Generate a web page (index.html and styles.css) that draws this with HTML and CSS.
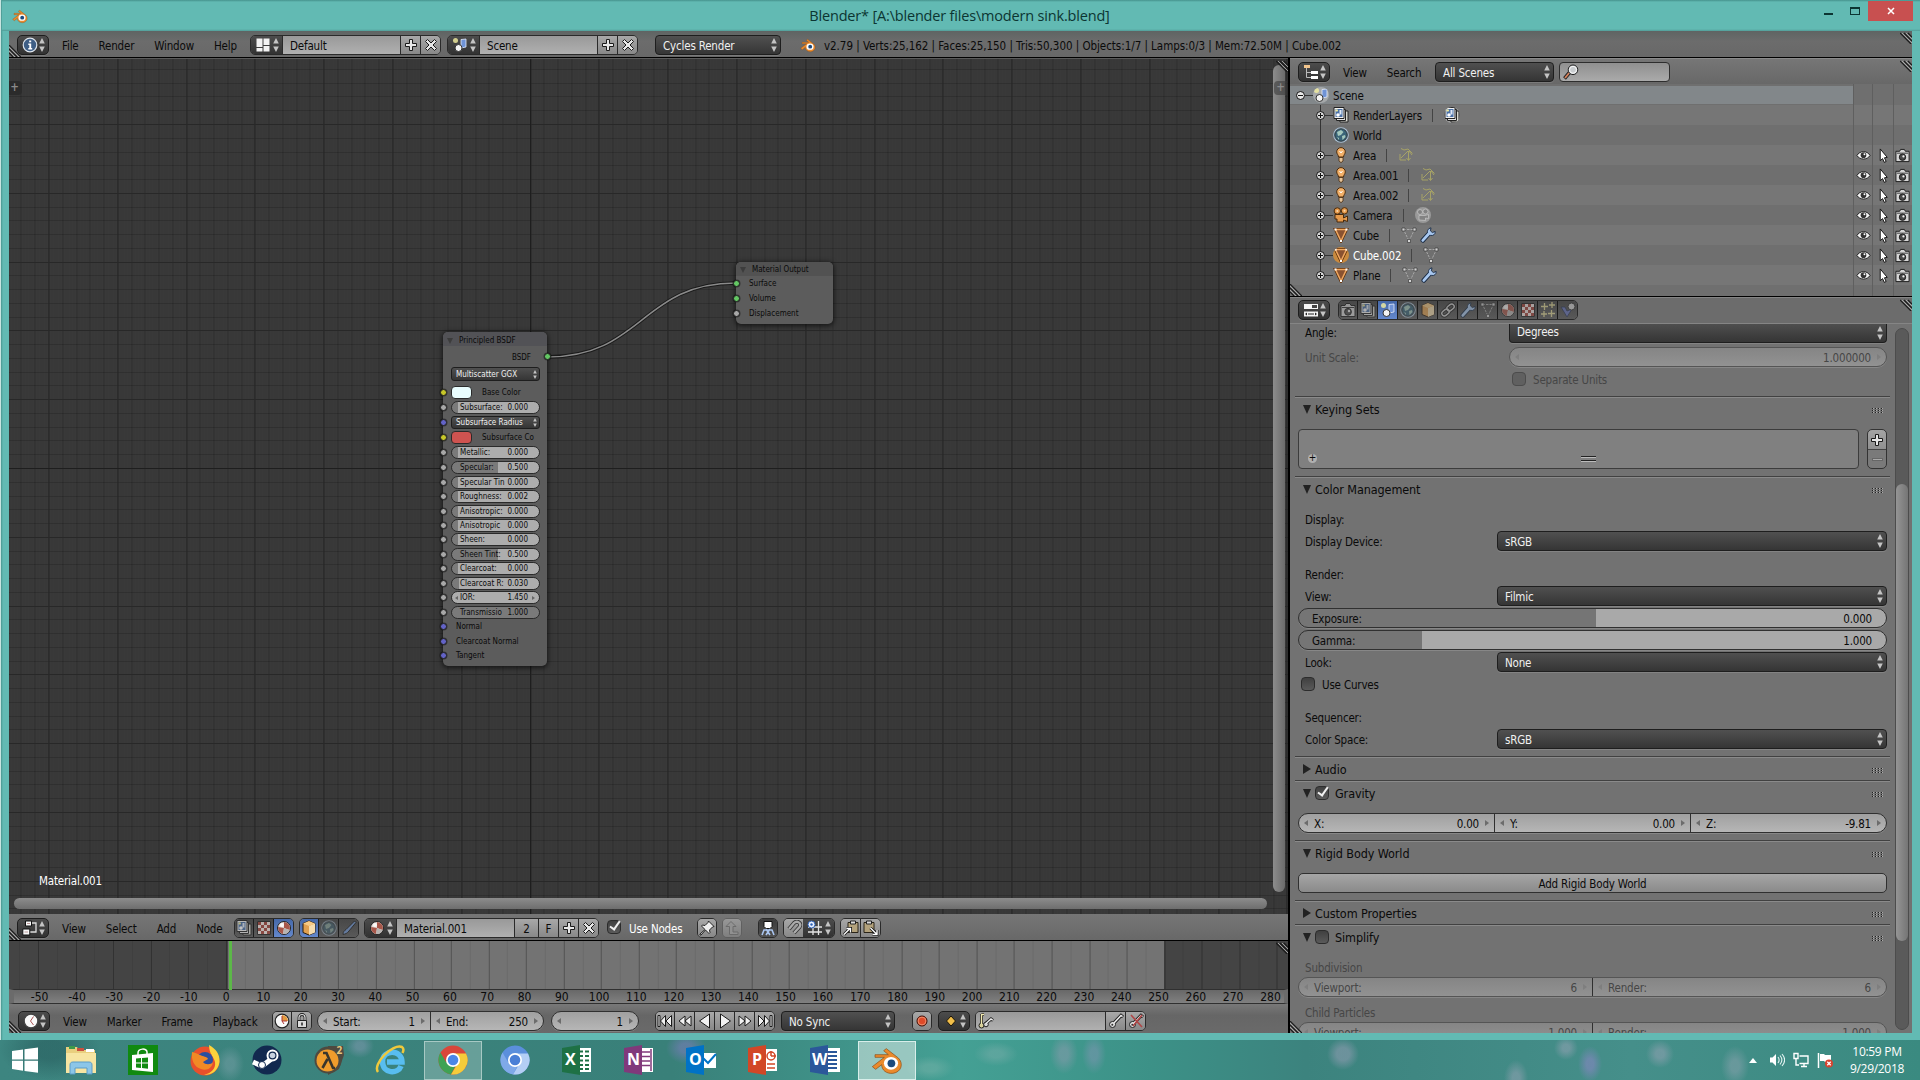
FILE: index.html
```
<!DOCTYPE html>
<html lang="en">
<head>
  <meta charset="UTF-8">
  <title>Blender* [A:\blender files\modern sink.blend]</title>
  <link rel="stylesheet" href="styles.css">
</head>
<body>
  <svg class="sprite" xmlns="http://www.w3.org/2000/svg">
    <symbol id="plus" viewBox="0 0 16 16"><path d="M6.500 2.500h3v4h4v3h-4v4h-3v-4h-4v-3h4z" fill="#e8e8e8" stroke="#1a1a1a"/></symbol>
    <symbol id="cross" viewBox="0 0 16 16"><path d="M2.500 4.500l2-2L8 6l3.500-3.500 2 2L10 8l3.500 3.500-2 2L8 10l-3.500 3.500-2-2L6 8z" fill="#e8e8e8" stroke="#1a1a1a"/></symbol>
    <symbol id="updown" viewBox="0 0 6 14"><path d="M3 0l2.800 5.500H.2zM3 14l2.800-5.500H.2z" fill="#c4c4c4"/></symbol>
    <symbol id="info" viewBox="0 0 16 16"><circle cx="8" cy="8" r="6.800" fill="#3f5f86" stroke="#dfe6ee" stroke-width="1.200"/><path d="M7.200 3.500h2v1.800h-2zM6.300 6.500h2.900v4.500h1v1.400H6.300V11h1V8h-1z" fill="#fff"/></symbol>
    <symbol id="layout" viewBox="0 0 16 16"><path d="M1.500 1.500h6v8.500h-6zM8.500 1.500h6V8h-6zM8.500 9h6v5.500h-6zM1.500 11h6v3.500h-6z" fill="#f2f2f2"/></symbol>
    <symbol id="scene" viewBox="0 0 16 16"><circle cx="3.500" cy="3.500" r="2.500" fill="#f5f0a0" opacity=".8"/><path d="M9 2.500l5-.5v8l-5 1z" fill="#6f93d6" stroke="#e4ebfa" stroke-width=".8"/><circle cx="6.500" cy="11" r="3.500" fill="#f4f4f4" stroke="#333"/></symbol>
    <symbol id="blender" viewBox="0 0 24 24"><path d="M1 17l9-7H3V8h10L9.500 5l2-1.500 9 7c4 4 2.500 10.500-4 11.500-5 .5-8.500-2.500-8.500-6.500L3.500 19z" fill="#ea8a2c" stroke="#8a4a12" stroke-width=".5"/><ellipse cx="15" cy="14.500" rx="5.300" ry="4.800" fill="#fff"/><circle cx="15.300" cy="14.500" r="2.900" fill="#1d4a7c"/></symbol>
    <symbol id="tree" viewBox="0 0 16 16"><path d="M3.500 4v9.500H8M3.500 8.500H8" fill="none" stroke="#bbb"/><path d="M1 1h6v3H1z" fill="#f3c58c"/><path d="M8 7h7v3H8zM8 12h7v3H8z" fill="#fff"/></symbol>
    <symbol id="lens" viewBox="0 0 16 16"><path d="M1.500 14.500l5-6" stroke="#222" stroke-width="3.600"/><path d="M2 14l4.500-5.500" stroke="#d8825c" stroke-width="1.800"/><circle cx="10" cy="5.800" r="4.800" fill="#c9cdd0" stroke="#222"/><circle cx="10" cy="5.800" r="3.500" fill="none" stroke="#fff" stroke-width=".9"/></symbol>
    <symbol id="rlayers" viewBox="0 0 16 16"><path d="M6 4h9v11H7z" fill="#d8d8d0" stroke="#222"/><path d="M3.500 2.500h9v11h-9z" fill="#e6e6e6" stroke="#222"/><path d="M1 .5h10v11H1z" fill="#f2f2f2" stroke="#222"/><path d="M2.500 2h7v8h-7z" fill="#4c72a8"/><path d="M6.500 3h2v4.500h-2z" fill="#dfe8f5"/><circle cx="5" cy="8" r="1.800" fill="#fff"/><circle cx="3.700" cy="3.400" r="1.200" fill="#f1eb9a"/></symbol>
    <symbol id="world" viewBox="0 0 16 16"><circle cx="8" cy="8" r="7.800" fill="#a9c1d6"/><circle cx="8" cy="8" r="6.300" fill="#3a6478" stroke="#222" stroke-width=".8"/><path d="M4 5l4-2 2.500 2L8 8l-3 1zM9 9l3-1 .5 2-3 3zM4 10l2 1v2z" fill="#a4c8bc"/></symbol>
    <symbol id="lamp" viewBox="0 0 16 16"><path d="M8 .6a4.300 4.300 0 0 0-4.300 4.300c0 2 1.800 3 1.800 5.100h5c0-2.100 1.800-3.100 1.800-5.100A4.300 4.300 0 0 0 8 .6z" fill="#f2b069" stroke="#4a2b0c"/><path d="M6.500 4l1.500 2 1.500-2" fill="none" stroke="#fff"/><path d="M6 10.500h4v3.500l-2 1.600-2-1.600z" fill="#e6c49a" stroke="#4a2b0c" stroke-width=".8"/></symbol>
    <symbol id="arealamp" viewBox="0 0 16 16"><path d="M3 1.500l3 1.500 4-1 4.500 4.500M10 4L3 11M2 7v6h6M10.500 4v9M8.500 11l2 2.500 2-2.500M11 4l3 4" fill="none" stroke="#a6a266"/></symbol>
    <symbol id="camera" viewBox="0 0 16 16"><circle cx="4.300" cy="4" r="3.200" fill="#e69a4c" stroke="#4a2b0c"/><circle cx="11.500" cy="3.800" r="3.200" fill="#e69a4c" stroke="#4a2b0c"/><circle cx="4.300" cy="4" r="1" fill="#f8d8b0"/><circle cx="11.500" cy="3.800" r="1" fill="#f8d8b0"/><path d="M2 7.500h8.500V11l4-2v5.500l-4-1.500v2H4v-3H2z" fill="#e69a4c" stroke="#4a2b0c"/></symbol>
    <symbol id="cameradata" viewBox="0 0 16 16"><circle cx="8" cy="8" r="8" fill="#999"/><g fill="#828282" stroke="#c8c8c8" stroke-width=".7"><circle cx="5" cy="5" r="2.500"/><circle cx="10.500" cy="4.500" r="2.500"/><path d="M4 8.500h6l3.500-1v4l-3-.5v2.500L4 13z"/></g></symbol>
    <symbol id="mesh" viewBox="0 0 16 16"><path d="M2.500 2.500h11L8 14z" fill="#b3622a" stroke="#5b2c08" stroke-width="3"/><path d="M2.500 2.500h11L8 14z" fill="#8a5230" stroke="#f0a860" stroke-width="1.500"/><path d="M1.500 1.500h2v2h-2zM12.500 1.500h2v2h-2zM7 13h2v2H7z" fill="#fff"/></symbol>
    <symbol id="meshdata" viewBox="0 0 16 16"><path d="M2.500 2.500h11L8 14z" fill="none" stroke="#a8a8a8" stroke-dasharray="2.500 1"/><path d="M1 1h3v3H1zM12 1h3v3h-3zM6.500 12.500h3v3h-3z" fill="#d4d4d4" stroke="#3a3a3a" stroke-width=".7"/></symbol>
    <symbol id="wrench" viewBox="0 0 16 16"><path d="M2.800 13.400L9 6.500" stroke="#182a44" stroke-width="4.600" stroke-linecap="round"/><path d="M9 1.600l2-.8-.6 3 2 1.800 2.800-1.200c.2 3-2 4.600-4.600 4L7.600 6C7.200 4 7.700 2.500 9 1.600z" fill="#a9c8ef" stroke="#182a44" stroke-width=".9"/><path d="M2.800 13.400L9 6.500" stroke="#a9c8ef" stroke-width="2.800" stroke-linecap="round"/></symbol>
    <symbol id="eye" viewBox="0 0 16 16"><path d="M1 8c3-5.500 11-5.500 14 0-3 5-11 5-14 0z" fill="#f4f4f4" stroke="#1f1f1f"/><circle cx="8" cy="7.600" r="3" fill="#333"/><circle cx="9" cy="6.600" r="1" fill="#fff"/></symbol>
    <symbol id="cursor" viewBox="0 0 16 16"><path d="M4.500 1l7.500 9-3 .4 1.800 4-2 .9-1.800-4-2.500 2.200z" fill="#fff" stroke="#111"/></symbol>
    <symbol id="rendercam" viewBox="0 0 16 16"><path d="M1 3.500h4l1-2h4l1 2h4v11H1z" fill="#d6d6d6" stroke="#1a1a1a"/><path d="M2 5.500h12" stroke="#333"/><circle cx="8" cy="9.800" r="3.400" fill="#4a4a4a" stroke="#1a1a1a"/><circle cx="9" cy="9" r="1.200" fill="#eee"/></symbol>
    <symbol id="props" viewBox="0 0 16 16"><path d="M1 2h14v5H1z" fill="#f5f5f5"/><path d="M9 3h5v3H9z" fill="#444"/><path d="M1 9.500h14v5H1z" fill="#f5f5f5"/><path d="M2 12l2-1.500v3zM14 12l-2-1.500v3zM5 11.500h6v1H5z" fill="#222"/></symbol>
    <symbol id="cube" viewBox="0 0 16 16"><path d="M8 1l6 2.500v9L8 15l-6-2.500v-9z" fill="#e0a050" stroke="#2a1c0c"/><path d="M8 6l6-2.500v9L8 15z" fill="#f5dcae"/><path d="M8 1l6 2.500L8 6 2 3.500z" fill="#f6ca86"/></symbol>
    <symbol id="chain" viewBox="0 0 16 16"><g fill="none" stroke="#222" stroke-width="3.400"><rect x="1.500" y="8" width="8" height="5" rx="2.500" transform="rotate(-40 5.500 10.500)"/><rect x="6.500" y="3" width="8" height="5" rx="2.500" transform="rotate(-40 10.500 5.500)"/></g><g fill="none" stroke="#ccc" stroke-width="1.400"><rect x="1.500" y="8" width="8" height="5" rx="2.500" transform="rotate(-40 5.500 10.500)"/><rect x="6.500" y="3" width="8" height="5" rx="2.500" transform="rotate(-40 10.500 5.500)"/></g></symbol>
    <symbol id="material" viewBox="0 0 16 16"><circle cx="8" cy="8" r="6.500" fill="#e6dcd8" stroke="#222"/><path d="M8 2a6 6 0 0 1 5.500 8L8 8zM8 8l-1 5.900A6 6 0 0 1 2.200 7z" fill="#a8574a"/><path d="M13.500 10A6 6 0 0 1 7 13.900L8 8z" fill="#b8b4b2"/><circle cx="6" cy="5" r="2" fill="#fff" opacity=".8"/></symbol>
    <symbol id="texture" viewBox="0 0 16 16"><path d="M1.500 1.500h13v13h-13z" fill="#f5e6e2" stroke="#222"/><path d="M2 2h3v3H2zM8 2h3v3H8zM5 5h3v3H5zM11 5h3v3h-3zM2 8h3v3H2zM8 8h3v3H8zM5 11h3v3H5zM11 11h3v3h-3z" fill="#a5433a"/></symbol>
    <symbol id="particles" viewBox="0 0 16 16"><path d="M4.500 1v7M1 4.500h7M12 0v6M9 3h6M4 9v6M1 12h6M11.500 8v7M8 11.500h7" stroke="#e0d896" stroke-width="1.300"/></symbol>
    <symbol id="physics" viewBox="0 0 16 16"><path d="M1 5h4l2 4 5-2-5 8z" fill="#6674b8" stroke="#26304f" stroke-width=".8"/><circle cx="11.500" cy="4.500" r="3.500" fill="#d8d8d8" stroke="#333"/></symbol>
    <symbol id="nodes" viewBox="0 0 16 16"><path d="M8 3h6v9H8" fill="none" stroke="#ddd" stroke-width="1.300"/><path d="M3.500 1h6v5h-6zM.8 9h7v6h-7z" fill="#f8f8f8" stroke="#111"/><path d="M5 3.500h3M2.500 12h3.500" stroke="#b99"/></symbol>
    <symbol id="brush" viewBox="0 0 16 16"><path d="M2 14.500c0-3 1.500-4 3-5L13.500 1 15 2.500 8 11c-2 2.500-3.500 3-6 3.500z" fill="#6d8fc5" stroke="#222"/></symbol>
    <symbol id="clock" viewBox="0 0 16 16"><circle cx="8" cy="8" r="6.800" fill="#fafafa" stroke="#444" stroke-width="1.200"/><path d="M10.500 3.500L7.500 8l3 4" fill="none" stroke="#a55" /></symbol>
    <symbol id="clock2" viewBox="0 0 16 16"><circle cx="8" cy="8" r="6.800" fill="#fafafa" stroke="#222" stroke-width="1.200"/><path d="M8 8V2a6 6 0 0 1 6 6z" fill="#e39a3f"/><path d="M8 3v5h5M8 8l2 3" fill="none" stroke="#a33"/></symbol>
    <symbol id="lock" viewBox="0 0 16 16"><path d="M5 8V4.500a3 3 0 0 1 6 0V8" fill="none" stroke="#222" stroke-width="2.800"/><path d="M5 8V4.500a3 3 0 0 1 6 0V8" fill="none" stroke="#ddd" stroke-width="1.200"/><path d="M3.500 7.500h9v7h-9z" fill="#ddd" stroke="#222"/><path d="M8 9.500v3" stroke="#222" stroke-width="1.500"/></symbol>
    <symbol id="pin" viewBox="0 0 16 16"><path d="M9.500 1l5.500 5.500-1.500.5-3 3 .5 2.500-1 1L6.500 10 2 15l-1 0v-1l5-4.500L2.500 6l1-1 2.500.5 3-3z" fill="#eee" stroke="#222"/></symbol>
    <symbol id="up" viewBox="0 0 16 16"><path d="M7 1.500l5 5H9V12h5v2.500H5.500V6.500H2z" fill="#a0a0a0" stroke="#6a6a6a"/></symbol>
    <symbol id="backdrop" viewBox="0 0 16 16"><path d="M4 1.500h8v5l-2 2H6l-2-2z" fill="#fff" stroke="#111"/><path d="M2 15l2-5h8l2 5M6 15l4-6M10 15L6 9" fill="none" stroke="#a9c4ee" stroke-width="1.600"/></symbol>
    <symbol id="magnet" viewBox="0 0 16 16"><path d="M3 9l5-6c3-3 8 0 5.500 4L8 13" fill="none" stroke="#333" stroke-width="4"/><path d="M3 9l5-6c3-3 8 0 5.500 4L8 13" fill="none" stroke="#aaa" stroke-width="2.400"/></symbol>
    <symbol id="snapgrid" viewBox="0 0 16 16"><path d="M6 3v12M11.500 1v14M1 7h14M1 12h14" stroke="#e4e4e4" stroke-width="1.300"/><circle cx="4.500" cy="4.500" r="3.500" fill="#e8f0ff" stroke="#2f62b5"/><circle cx="4.500" cy="4.500" r="1.200" fill="#2f62b5"/></symbol>
    <symbol id="copy" viewBox="0 0 16 16"><path d="M5 2.500h10v10H5z" fill="#b3a27c" stroke="#2a2418"/><path d="M7.500 1h5v3h-5z" fill="#ddd" stroke="#222"/><path d="M1 14.500L7 8.500M3.500 8.500h4v4" fill="none" stroke="#111" stroke-width="3"/><path d="M1 14.500L7 8.500M3.500 8.500h4v4" fill="none" stroke="#fff" stroke-width="1.400"/></symbol>
    <symbol id="paste" viewBox="0 0 16 16"><path d="M1 2.500h10v10H1z" fill="#b3a27c" stroke="#2a2418"/><path d="M3.500 1h5v3h-5z" fill="#ddd" stroke="#222"/><path d="M7.500 8l6.500 6.500M14 10v4.500H9.500" fill="none" stroke="#111" stroke-width="3"/><path d="M7.500 8l6.500 6.500M14 10v4.500H9.500" fill="none" stroke="#fff" stroke-width="1.400"/></symbol>
    <symbol id="first" viewBox="0 0 16 16"><path d="M1 2.500h2v11H1zM8.500 2.500v11L3.500 8zM14.500 2.500v11L9 8z" fill="#f2f2f2" stroke="#1a1a1a"/></symbol>
    <symbol id="rew" viewBox="0 0 16 16"><path d="M8 3v10L2 8zM14 3v10L8 8z" fill="#f2f2f2" stroke="#1a1a1a"/></symbol>
    <symbol id="play" viewBox="0 0 16 16"><path d="M3.500 1l10 7-10 7z" fill="#f2f2f2" stroke="#1a1a1a"/></symbol>
    <symbol id="rec" viewBox="0 0 16 16"><circle cx="8" cy="8" r="5" fill="#e04a28" stroke="#3a0d05"/><circle cx="8" cy="8" r="3.900" fill="none" stroke="#f0a080" stroke-width=".8"/></symbol>
    <symbol id="diamond" viewBox="0 0 16 16"><path d="M8 3l4.500 5L8 13 3.500 8z" fill="#f2bf4a" stroke="#1a1408"/></symbol>
    <symbol id="key" viewBox="0 0 16 16"><path d="M5.500 10.500L13 2.500l2 1.500" fill="none" stroke="#222" stroke-width="3.400"/><circle cx="4.500" cy="11.500" r="3" fill="#ddd" stroke="#222"/><path d="M5.500 10.500L13 2.500l1.500 1.200" fill="none" stroke="#eee" stroke-width="1.500"/><circle cx="4.300" cy="11.700" r="1" fill="#333"/></symbol>
    <symbol id="keyset" viewBox="0 0 16 16"><path d="M3.500 1v10M3.500 1.500H6M7 11l6-5 2 1.500" fill="none" stroke="#222" stroke-width="3"/><circle cx="3.500" cy="12.500" r="2.500" fill="#d8d09a" stroke="#222"/><circle cx="8" cy="11.500" r="2.300" fill="#d8d8d8" stroke="#222"/><path d="M3.500 1v10M3.500 1.500H6" fill="none" stroke="#f2eab0" stroke-width="1.400"/><path d="M8 10.500l5-4.500 1.800 1.300" fill="none" stroke="#eee" stroke-width="1.400"/></symbol>
    <symbol id="corner" viewBox="0 0 12 12"><path d="M0 1l11 11M4 1l8 8M8 1l4 4" stroke="#1c1c1c" stroke-width="1.200"/><path d="M2 1l10 10M6 1l6 6" stroke="#b8b8b8" stroke-width=".8"/></symbol>
    <symbol id="corner-bl" viewBox="0 0 12 12"><path d="M0 0l12 12M0 4l8 8M0 8l4 4" stroke="#1c1c1c" stroke-width="1.200"/><path d="M0 2l10 10M0 6l6 6" stroke="#b8b8b8" stroke-width=".8"/></symbol>
  </svg>

  <div class="window">
    <div class="titlebar">
      <svg class="app-icon"><use href="#blender"/></svg>
      <span class="title">Blender* [A:\blender files\modern sink.blend]</span>
      <div class="win-buttons">
        <i class="minimize"></i>
        <i class="maximize"></i>
        <b class="close"><svg viewBox="0 0 8 8"><path d="M1 1l6 6M7 1L1 7" stroke="#fff" stroke-width="1.500"/></svg></b>
      </div>
    </div>

    <div class="app">
      <!-- info header -->
      <div class="header info-header">
        <div class="dd editor"><svg class="ic"><use href="#info"/></svg><svg class="ud"><use href="#updown"/></svg></div>
        <div class="menus menus-info"><span>File</span><span>Render</span><span>Window</span><span>Help</span></div>
        <div class="idblock">
          <div class="dd"><svg class="ic"><use href="#layout"/></svg><svg class="ud"><use href="#updown"/></svg></div>
          <div class="name">Default</div>
          <div class="btn"><svg class="ic"><use href="#plus"/></svg></div>
          <div class="btn"><svg class="ic"><use href="#cross"/></svg></div>
        </div>
        <div class="idblock scene-block">
          <div class="dd"><svg class="ic"><use href="#scene"/></svg><svg class="ud"><use href="#updown"/></svg></div>
          <div class="name">Scene</div>
          <div class="btn"><svg class="ic"><use href="#plus"/></svg></div>
          <div class="btn"><svg class="ic"><use href="#cross"/></svg></div>
        </div>
        <div class="select engine"><span>Cycles Render</span><svg class="ud"><use href="#updown"/></svg></div>
        <svg class="ic logo"><use href="#blender"/></svg>
        <span class="stats">v2.79 | Verts:25,162 | Faces:25,150 | Tris:50,300 | Objects:1/7 | Lamps:0/3 | Mem:72.50M | Cube.002</span>
        <svg class="corner tr"><use href="#corner"/></svg>
        <svg class="corner bl"><use href="#corner-bl"/></svg>
      </div>

      <div class="areas">
        <div class="left">
          <!-- node editor -->
          <div class="canvas">
            <div class="tab tab-left">+</div>
            <svg class="wire" viewBox="0 0 1280 856"><path d="M538 299C634 299 632 225 727 225" class="wire-back"/><path d="M538 299C634 299 632 225 727 225" class="wire-front"/></svg>

            <div class="node bsdf">
              <div class="node-title"><i></i>Principled BSDF</div>
              <div class="out">BSDF<b class="sock green"></b></div>
              <div class="nselect dist">Multiscatter GGX<svg class="nud"><use href="#updown"/></svg></div>
              <div class="row tall"><b class="sock yellow"></b><i class="swatch white"></i><span>Base Color</span></div>
              <div class="row tall"><b class="sock grey"></b><div class="num" style="--fill:7%"><span>Subsurface:</span><em>0.000</em></div></div>
              <div class="row tall"><b class="sock blue"></b><div class="nselect">Subsurface Radius<svg class="nud"><use href="#updown"/></svg></div></div>
              <div class="row tall"><b class="sock yellow"></b><i class="swatch red"></i><span>Subsurface Co</span></div>
              <div class="row tall"><b class="sock grey"></b><div class="num" style="--fill:7%"><span>Metallic:</span><em>0.000</em></div></div>
              <div class="row tall"><b class="sock grey"></b><div class="num" style="--fill:53%"><span>Specular:</span><em>0.500</em></div></div>
              <div class="row"><b class="sock grey"></b><div class="num" style="--fill:7%"><span>Specular Tin</span><em>0.000</em></div></div>
              <div class="row"><b class="sock grey"></b><div class="num" style="--fill:7%"><span>Roughness:</span><em>0.002</em></div></div>
              <div class="row"><b class="sock grey"></b><div class="num" style="--fill:7%"><span>Anisotropic:</span><em>0.000</em></div></div>
              <div class="row"><b class="sock grey"></b><div class="num" style="--fill:7%"><span>Anisotropic</span><em>0.000</em></div></div>
              <div class="row"><b class="sock grey"></b><div class="num" style="--fill:7%"><span>Sheen:</span><em>0.000</em></div></div>
              <div class="row"><b class="sock grey"></b><div class="num" style="--fill:53%"><span>Sheen Tint:</span><em>0.500</em></div></div>
              <div class="row"><b class="sock grey"></b><div class="num" style="--fill:7%"><span>Clearcoat:</span><em>0.000</em></div></div>
              <div class="row"><b class="sock grey"></b><div class="num" style="--fill:8%"><span>Clearcoat R:</span><em>0.030</em></div></div>
              <div class="row"><b class="sock grey"></b><div class="num ior" style="--fill:0%"><span>IOR:</span><em>1.450</em></div></div>
              <div class="row"><b class="sock grey"></b><div class="num" style="--fill:100%"><span>Transmissio</span><em>1.000</em></div></div>
              <div class="row"><b class="sock blue"></b><span class="plain">Normal</span></div>
              <div class="row"><b class="sock blue"></b><span class="plain">Clearcoat Normal</span></div>
              <div class="row"><b class="sock blue"></b><span class="plain">Tangent</span></div>
            </div>

            <div class="node output">
              <div class="node-title"><i></i>Material Output</div>
              <div class="row tall"><b class="sock green"></b><span class="plain">Surface</span></div>
              <div class="row tall"><b class="sock green"></b><span class="plain">Volume</span></div>
              <div class="row tall"><b class="sock grey"></b><span class="plain">Displacement</span></div>
            </div>

            <span class="mat-name">Material.001</span>
            <div class="vscroll"></div>
            <div class="hscroll"></div>
            <div class="tab tab-right">+</div>
            <svg class="corner tr"><use href="#corner"/></svg>
          </div>

          <div class="header node-header">
            <div class="dd editor"><svg class="ic"><use href="#nodes"/></svg><svg class="ud"><use href="#updown"/></svg></div>
            <div class="menus menus-node"><span>View</span><span>Select</span><span>Add</span><span>Node</span></div>
            <div class="icongroup">
              <div><svg class="ic dim"><use href="#rlayers"/></svg></div>
              <div><svg class="ic dim"><use href="#texture"/></svg></div>
              <div class="on"><svg class="ic"><use href="#material"/></svg></div>
            </div>
            <div class="icongroup shader-type">
              <div class="on"><svg class="ic"><use href="#cube"/></svg></div>
              <div><svg class="ic faint"><use href="#world"/></svg></div>
              <div><svg class="ic dim"><use href="#brush"/></svg></div>
            </div>
            <div class="idblock mat-block">
              <div class="dd"><svg class="ic"><use href="#material"/></svg><svg class="ud"><use href="#updown"/></svg></div>
              <div class="name">Material.001</div>
              <div class="btn users">2</div>
              <div class="btn fake">F</div>
              <div class="btn"><svg class="ic"><use href="#plus"/></svg></div>
              <div class="btn"><svg class="ic"><use href="#cross"/></svg></div>
            </div>
            <div class="check checked use-nodes"></div>
            <span class="use-nodes-label">Use Nodes</span>
            <div class="btns one pin-btn"><div class="btn"><svg class="ic"><use href="#pin"/></svg></div></div>
            <div class="btns one off up-btn"><div class="btn"><svg class="ic"><use href="#up"/></svg></div></div>
            <div class="icongroup one backdrop-btn"><div><svg class="ic"><use href="#backdrop"/></svg></div></div>
            <div class="idblock snap">
              <div class="btn magnet"><svg class="ic"><use href="#magnet"/></svg></div>
              <div class="dd"><svg class="ic"><use href="#snapgrid"/></svg><svg class="ud"><use href="#updown"/></svg></div>
            </div>
            <div class="btns clip"><div class="btn"><svg class="ic"><use href="#copy"/></svg></div><div class="btn"><svg class="ic"><use href="#paste"/></svg></div></div>
            <svg class="corner bl"><use href="#corner-bl"/></svg>
          </div>

          <!-- timeline -->
          <div class="timeline">
            <div class="before"></div>
            <div class="range"></div>
            <div class="after"></div>
            <div class="frame-line"></div>
            <svg class="corner tr"><use href="#corner"/></svg>
          </div>
          <div class="ruler">
            <span>-50</span><span>-40</span><span>-30</span><span>-20</span><span>-10</span><span>0</span><span>10</span><span>20</span><span>30</span><span>40</span><span>50</span><span>60</span><span>70</span><span>80</span><span>90</span><span>100</span><span>110</span><span>120</span><span>130</span><span>140</span><span>150</span><span>160</span><span>170</span><span>180</span><span>190</span><span>200</span><span>210</span><span>220</span><span>230</span><span>240</span><span>250</span><span>260</span><span>270</span><span>280</span>
          </div>
          <div class="header time-header">
            <div class="dd editor"><svg class="ic"><use href="#clock"/></svg><svg class="ud"><use href="#updown"/></svg></div>
            <div class="menus menus-time"><span>View</span><span>Marker</span><span>Frame</span><span>Playback</span></div>
            <div class="btns"><div class="btn"><svg class="ic"><use href="#clock2"/></svg></div><div class="btn"><svg class="ic"><use href="#lock"/></svg></div></div>
            <div class="fields range-fields"><div class="field"><span>Start:</span><em>1</em></div><div class="field"><span>End:</span><em>250</em></div></div>
            <div class="fields current-field"><div class="field"><span></span><em>1</em></div></div>
            <div class="btns transport">
              <div class="btn"><svg class="ic"><use href="#first"/></svg></div>
              <div class="btn"><svg class="ic"><use href="#rew"/></svg></div>
              <div class="btn"><svg class="ic flip"><use href="#play"/></svg></div>
              <div class="btn"><svg class="ic"><use href="#play"/></svg></div>
              <div class="btn"><svg class="ic flip"><use href="#rew"/></svg></div>
              <div class="btn"><svg class="ic flip"><use href="#first"/></svg></div>
            </div>
            <div class="select sync"><span>No Sync</span><svg class="ud"><use href="#updown"/></svg></div>
            <div class="btns one rec-btn"><div class="btn"><svg class="ic"><use href="#rec"/></svg></div></div>
            <div class="dd keytype"><svg class="ic"><use href="#diamond"/></svg><svg class="ud"><use href="#updown"/></svg></div>
            <div class="idblock keying">
              <div class="name"><svg class="ic"><use href="#keyset"/></svg></div>
              <div class="btn"><svg class="ic"><use href="#key"/></svg></div>
              <div class="btn"><svg class="ic" viewBox="0 0 16 16"><use href="#key"/><path d="M3 2l11 12M14 2L5 13" stroke="#b04545" stroke-width="1.600"/></svg></div>
            </div>
            <svg class="corner bl"><use href="#corner-bl"/></svg>
          </div>
        </div>

        <div class="right">
          <!-- outliner -->
          <div class="header outliner-header">
            <div class="dd editor"><svg class="ic"><use href="#tree"/></svg><svg class="ud"><use href="#updown"/></svg></div>
            <div class="menus menus-outliner"><span>View</span><span>Search</span></div>
            <div class="select scenes"><span>All Scenes</span><svg class="ud"><use href="#updown"/></svg></div>
            <div class="search"><svg class="ic"><use href="#lens"/></svg></div>
            <svg class="corner tr"><use href="#corner"/></svg>
          </div>
          <div class="outliner">
            <div class="orow root"><i class="exp minus"></i><svg class="ic glow"><use href="#scene"/></svg><span>Scene</span></div>
            <div class="orow"><i class="exp"></i><svg class="ic"><use href="#rlayers"/></svg><span>RenderLayers</span><u></u><svg class="ic glow"><use href="#rlayers"/></svg></div>
            <div class="orow"><i class="exp none"></i><svg class="ic"><use href="#world"/></svg><span>World</span></div>
            <div class="orow"><i class="exp"></i><svg class="ic"><use href="#lamp"/></svg><span>Area</span><u></u><svg class="ic"><use href="#arealamp"/></svg><div class="flags"><svg class="ic"><use href="#eye"/></svg><svg class="ic"><use href="#cursor"/></svg><svg class="ic"><use href="#rendercam"/></svg></div></div>
            <div class="orow"><i class="exp"></i><svg class="ic"><use href="#lamp"/></svg><span>Area.001</span><u></u><svg class="ic"><use href="#arealamp"/></svg><div class="flags"><svg class="ic"><use href="#eye"/></svg><svg class="ic"><use href="#cursor"/></svg><svg class="ic"><use href="#rendercam"/></svg></div></div>
            <div class="orow"><i class="exp"></i><svg class="ic"><use href="#lamp"/></svg><span>Area.002</span><u></u><svg class="ic"><use href="#arealamp"/></svg><div class="flags"><svg class="ic"><use href="#eye"/></svg><svg class="ic"><use href="#cursor"/></svg><svg class="ic"><use href="#rendercam"/></svg></div></div>
            <div class="orow"><i class="exp"></i><svg class="ic"><use href="#camera"/></svg><span>Camera</span><u></u><svg class="ic"><use href="#cameradata"/></svg><div class="flags"><svg class="ic"><use href="#eye"/></svg><svg class="ic"><use href="#cursor"/></svg><svg class="ic"><use href="#rendercam"/></svg></div></div>
            <div class="orow"><i class="exp"></i><svg class="ic"><use href="#mesh"/></svg><span>Cube</span><u></u><svg class="ic"><use href="#meshdata"/></svg><svg class="ic mod"><use href="#wrench"/></svg><div class="flags"><svg class="ic"><use href="#eye"/></svg><svg class="ic"><use href="#cursor"/></svg><svg class="ic"><use href="#rendercam"/></svg></div></div>
            <div class="orow active"><i class="exp"></i><svg class="ic"><use href="#mesh"/></svg><span>Cube.002</span><u></u><svg class="ic"><use href="#meshdata"/></svg><div class="flags"><svg class="ic"><use href="#eye"/></svg><svg class="ic"><use href="#cursor"/></svg><svg class="ic"><use href="#rendercam"/></svg></div></div>
            <div class="orow"><i class="exp"></i><svg class="ic"><use href="#mesh"/></svg><span>Plane</span><u></u><svg class="ic"><use href="#meshdata"/></svg><svg class="ic mod"><use href="#wrench"/></svg><div class="flags"><svg class="ic"><use href="#eye"/></svg><svg class="ic"><use href="#cursor"/></svg><svg class="ic"><use href="#rendercam"/></svg></div></div>
            <svg class="corner bl"><use href="#corner-bl"/></svg>
          </div>

          <!-- properties -->
          <div class="header props-header">
            <div class="dd editor"><svg class="ic"><use href="#props"/></svg><svg class="ud"><use href="#updown"/></svg></div>
            <div class="icongroup tabs">
              <div><svg class="ic dim"><use href="#rendercam"/></svg></div>
              <div><svg class="ic dim"><use href="#rlayers"/></svg></div>
              <div class="on"><svg class="ic"><use href="#scene"/></svg></div>
              <div><svg class="ic dim"><use href="#world"/></svg></div>
              <div><svg class="ic dim"><use href="#cube"/></svg></div>
              <div><svg class="ic dim"><use href="#chain"/></svg></div>
              <div><svg class="ic dim"><use href="#wrench"/></svg></div>
              <div><svg class="ic dim"><use href="#meshdata"/></svg></div>
              <div><svg class="ic dim"><use href="#material"/></svg></div>
              <div><svg class="ic dim"><use href="#texture"/></svg></div>
              <div><svg class="ic dim"><use href="#particles"/></svg></div>
              <div><svg class="ic dim"><use href="#physics"/></svg></div>
            </div>
            <svg class="corner tr"><use href="#corner"/></svg>
          </div>
          <div class="properties">
            <div class="panels">
              <div class="units">
                <div class="prow wide"><label>Angle:</label><div class="select cut"><span>Degrees</span><svg class="ud"><use href="#updown"/></svg></div></div>
                <div class="prow wide disabled"><label>Unit Scale:</label><div class="fields"><div class="field"><span></span><em>1.000000</em></div></div></div>
                <div class="prow wide disabled"><label></label><div class="check"></div><span>Separate Units</span></div>
              </div>

              <div class="panel keying-sets">
                <div class="phead"><i class="expanded"></i><span>Keying Sets</span><b class="grip"></b></div>
                <div class="list-row">
                  <div class="list"><i class="filter">+</i><i class="handle"></i></div>
                  <div class="list-btns"><div><svg class="ic"><use href="#plus"/></svg></div><div class="off"><i></i></div></div>
                </div>
              </div>

              <div class="panel color">
                <div class="phead"><i class="expanded"></i><span>Color Management</span><b class="grip"></b></div>
                <div class="prow"><label>Display:</label></div>
                <div class="prow"><label>Display Device:</label><div class="select"><span>sRGB</span><svg class="ud"><use href="#updown"/></svg></div></div>
                <div class="prow spaced"><label>Render:</label></div>
                <div class="prow"><label>View:</label><div class="select"><span>Filmic</span><svg class="ud"><use href="#updown"/></svg></div></div>
                <div class="slider" style="--fill:50.6%"><span>Exposure:</span><em>0.000</em></div>
                <div class="slider" style="--fill:21%"><span>Gamma:</span><em>1.000</em></div>
                <div class="prow"><label>Look:</label><div class="select"><span>None</span><svg class="ud"><use href="#updown"/></svg></div></div>
                <div class="prow curves"><div class="check"></div><span>Use Curves</span></div>
                <div class="prow spaced"><label>Sequencer:</label></div>
                <div class="prow"><label>Color Space:</label><div class="select"><span>sRGB</span><svg class="ud"><use href="#updown"/></svg></div></div>
              </div>

              <div class="panel closed">
                <div class="phead"><i></i><span>Audio</span><b class="grip"></b></div>
              </div>
              <div class="panel gravity">
                <div class="phead"><i class="expanded"></i><div class="check checked"></div><span>Gravity</span><b class="grip"></b></div>
                <div class="fields"><div class="field"><span>X:</span><em>0.00</em></div><div class="field"><span>Y:</span><em>0.00</em></div><div class="field"><span>Z:</span><em>-9.81</em></div></div>
              </div>
              <div class="panel rigid">
                <div class="phead"><i class="expanded"></i><span>Rigid Body World</span><b class="grip"></b></div>
                <div class="wide-btn">Add Rigid Body World</div>
              </div>
              <div class="panel closed">
                <div class="phead"><i></i><span>Custom Properties</span><b class="grip"></b></div>
              </div>
              <div class="panel simplify">
                <div class="phead"><i class="expanded"></i><div class="check"></div><span>Simplify</span><b class="grip"></b></div>
                <div class="disabled">
                  <div class="sub">Subdivision</div>
                  <div class="fields"><div class="field"><span>Viewport:</span><em>6</em></div><div class="field"><span>Render:</span><em>6</em></div></div>
                  <div class="sub">Child Particles</div>
                  <div class="fields"><div class="field"><span>Viewport:</span><em>1.000</em></div><div class="field"><span>Render:</span><em>1.000</em></div></div>
                </div>
              </div>
            </div>
            <div class="pscroll"><i></i></div>
            <svg class="corner bl"><use href="#corner-bl"/></svg>
          </div>
        </div>
      </div>
    </div>
  </div>

  <div class="taskbar">
    <div class="task start"><svg viewBox="0 0 26 26"><path d="M0 4l11-1.500v10H0zM12.500 2.200L26 .5v12H12.500zM0 13.700h11v10L0 22zM12.500 13.700H26v12l-13.500-1.800z" fill="#fff"/></svg></div>
    <div class="task"><svg viewBox="0 0 32 32"><path d="M1 3h11l2 3h16v23H1z" fill="#e9cf7e"/><path d="M4 2h6v3H4z" fill="#3d9a4a"/><path d="M12 4h7v3h-7z" fill="#c9503e"/><path d="M21 5h8v3h-8z" fill="#fff"/><path d="M1 9h30v20H1z" fill="#f7e5a2"/><path d="M5 30v-9c0-2 1-3 3-3h16c2 0 3 1 3 3v9h-5v-6H10v6z" fill="#8cc6e8" stroke="#5a9cc8"/></svg></div>
    <div class="task"><svg viewBox="0 0 32 32"><path d="M1 1h30v30H1z" fill="#108a10"/><path d="M11 11V9c0-5 9-5 9-1v2" fill="none" stroke="#fff" stroke-width="1.500"/><path d="M5 11l21-2v19L5 26z" fill="#fff"/><path d="M9 14.500l5-.5v4.500H9zM15 14l6-.600v5.100h-6zM9 19.500h5V24l-5-.5zM15 19.500h6v5.200l-6-.6z" fill="#108a10"/></svg></div>
    <div class="task"><svg viewBox="0 0 32 32"><circle cx="16" cy="17" r="14.500" fill="#e8502c"/><path d="M20 1c7 4 11 9 10.500 17C29 27 23 31 15 31c8-2 12-7 11-13-1-5-6-8-6-17z" fill="#fcd33c"/><circle cx="16" cy="16" r="8" fill="#2b4fa0"/><path d="M3 8c4 1 6 2 8 3 3 2 7 1 8 4l-5 3c2 3 8 3 10 0-1 7-7 9-12 7C5 23 2 16 3 8z" fill="#f18a25"/></svg></div>
    <div class="task"><svg viewBox="0 0 32 32"><circle cx="16" cy="16" r="14.500" fill="#12294f"/><path d="M2 18l9 4 8-6 3-5" stroke="#fff" stroke-width="5" fill="none"/><circle cx="21.500" cy="11.500" r="5" fill="#12294f" stroke="#fff" stroke-width="2"/><circle cx="21.500" cy="11.500" r="2.800" fill="#c8d2e0"/><circle cx="11" cy="21" r="3.500" fill="#fff" stroke="#12294f"/></svg></div>
    <div class="task"><svg viewBox="0 0 32 32"><path d="M15 2h15l1 9-5 14-11 6z" fill="#4e4a40"/><circle cx="15" cy="16" r="13.500" fill="#4e4a40"/><circle cx="14.500" cy="16.500" r="11" fill="#f09c2c"/><path d="M10 9h3.500l6.500 15h2M14.500 15l-5 9" fill="none" stroke="#3a352c" stroke-width="2.600"/><text x="23.500" y="10" class="hl">2</text></svg></div>
    <div class="task"><svg viewBox="0 0 32 32"><path d="M26 22c-3 8.500-18.500 8-18.500-4.500C7.500 5 27 5 27 18H12" fill="none" stroke="#58bdf0" stroke-width="5.500"/><path d="M3 28C-3 20 18-1 27 3c2 1.500 1.500 4 .5 6" fill="none" stroke="#efc93c" stroke-width="2.500"/></svg></div>
    <div class="task open"><svg viewBox="0 0 32 32"><circle cx="16" cy="16" r="14.500" fill="#d9463a"/><path d="M3.500 8.500A14.500 14.500 0 0 0 14 30.400L19.500 20 9 18z" fill="#3fa254"/><path d="M29 9.500A14.500 14.500 0 0 1 14 30.400L21.500 18 16 9.500z" fill="#f5cc3a"/><circle cx="16" cy="16" r="7" fill="#fff"/><circle cx="16" cy="16" r="5.300" fill="#4a86e8"/></svg></div>
    <div class="task"><svg viewBox="0 0 32 32"><circle cx="16" cy="16" r="14.500" fill="#5b8fdc"/><path d="M3.500 8.500A14.500 14.500 0 0 0 14 30.400L19.500 20 9 18z" fill="#7fa9e8"/><path d="M29 9.500A14.500 14.500 0 0 1 14 30.400L21.500 18 16 9.500z" fill="#b4cef5"/><circle cx="16" cy="16" r="7" fill="#fff"/><circle cx="16" cy="16" r="5.300" fill="#4a7fd6"/></svg></div>
    <div class="task"><svg viewBox="0 0 32 32"><path d="M15 4h15v24H15z" fill="#fff"/><path d="M19 7.500h3M19 12h3M19 16.500h3M19 21h3M19 25h3M24 7.500h4M24 12h4M24 16.500h4M24 21h4M24 25h4" stroke="#1e7145" stroke-width="2"/><path d="M1 4l18-3v30L1 28z" fill="#1e7145"/><text x="4" y="21" class="ms">X</text></svg></div>
    <div class="task"><svg viewBox="0 0 32 32"><path d="M17 4h13v24H17z" fill="#fff"/><path d="M19 8h8M19 12.500h8M19 17h8M19 21.500h8M28 5v22" stroke="#80397b" stroke-width="1.500"/><path d="M1 4l18-3v30L1 28z" fill="#80397b"/><text x="4" y="21" class="ms">N</text></svg></div>
    <div class="task"><svg viewBox="0 0 32 32"><path d="M17 9h14v15H17z" fill="#fff"/><path d="M18 14l5 5 8-9" fill="none" stroke="#0072c6" stroke-width="2"/><path d="M1 4l18-3v30L1 28z" fill="#0072c6"/><text x="4" y="21" class="ms">O</text></svg></div>
    <div class="task"><svg viewBox="0 0 32 32"><path d="M16 5h14v22H16z" fill="#fff"/><circle cx="24" cy="12" r="4" fill="#fff" stroke="#d24726" stroke-width="1.500"/><path d="M24 12V7M24 12h5M20 20h8M20 24h8" stroke="#d24726" stroke-width="1.500"/><path d="M1 4l18-3v30L1 28z" fill="#d24726"/><text x="5" y="21" class="ms">P</text></svg></div>
    <div class="task"><svg viewBox="0 0 32 32"><path d="M16 4h15v24H16z" fill="#fff"/><path d="M19 8h9M19 12h9M19 16h9M19 20h9M19 24h9" stroke="#2b579a" stroke-width="2"/><path d="M1 4l18-3v30L1 28z" fill="#2b579a"/><text x="3" y="21" class="ms">W</text></svg></div>
    <div class="task open focus"><svg><use href="#blender"/></svg></div>

    <div class="tray">
      <svg class="tray-up" viewBox="0 0 8 5"><path d="M4 0l4 5H0z" fill="#fff"/></svg>
      <svg viewBox="0 0 16 16"><path d="M1 5.500h2.500L7 2v12l-3.500-3.500H1z" fill="#fff"/><path d="M9 5c1.500 2 1.500 4 0 6M11 3.500c2.500 3 2.500 6 0 9M13 2c3.500 4 3.500 8 0 12" fill="none" stroke="#e4f4f2" stroke-width="1.100"/></svg>
      <svg viewBox="0 0 16 16"><path d="M6.500 4H15v7.500H6.500M8 14.500h6M11 12v2.500M1 1.500h4v5H1zM3 6.500V13h3" fill="none" stroke="#fff" stroke-width="1.400"/></svg>
      <svg viewBox="0 0 16 16"><path d="M1.500 1v15" stroke="#fff" stroke-width="1.500"/><path d="M3 2h4l1 1h6v7H8L7 9H3z" fill="#fff"/><circle cx="12" cy="11.500" r="4" fill="#d8432f"/><path d="M10.300 9.800l3.400 3.400M13.700 9.800l-3.400 3.400" stroke="#fff" stroke-width="1.300"/></svg>
      <div class="time"><span>10:59 PM</span><span>9/29/2018</span></div>
    </div>
  </div>
</body>
</html>
```
FILE: styles.css
```
* {
  box-sizing: border-box;
}
body {
  margin: 0;
  width: 1920px;
  height: 1080px;
  overflow: hidden;
  background: #62bab3;
  font-family: "DejaVu Sans Condensed", "DejaVu Sans", sans-serif;
  font-stretch: condensed;
  font-size: 11.5px;
  letter-spacing: -0.18px;
  color: #0a0a0a;
}
i, em {
  font-style: normal;
}
.sprite {
  position: absolute;
  width: 0;
  height: 0;
}
.window {
  height: 1040px;
  display: flex;
  flex-direction: column;
  padding: 0 8px 7px 9px;
  background: linear-gradient(90deg, #c8e4e0 0, #c8e4e0 1px, #4a9690 1px, #62bab3 3px);
}

/* title bar */
.titlebar {
  height: 31px;
  flex: none;
  margin: 0 -8px 0 -7px;
  display: flex;
  align-items: center;
  background: linear-gradient(#45938d 0, #62bab3 2px, #62bab3 29px, #529c97 31px);
}
.app-icon {
  width: 16px;
  height: 16px;
  margin-left: 10px;
}
.title {
  flex: 1;
  margin-left: 28px;
  padding-right: 11px;
  text-align: center;
  font: 14.500px "Open Sans", sans-serif;
  letter-spacing: -0.18px;
  color: #0c3532;
}
.win-buttons {
  display: flex;
  width: 96px;
  height: 31px;
  margin-left: -50px;
}
.minimize {
  width: 9px;
  height: 2px;
  margin: 13px 0 0 0;
  background: #0c3532;
}
.maximize {
  width: 10px;
  height: 8px;
  margin: 7px 8px 0 17px;
  border: 1px solid #0c3532;
  border-top-width: 2px;
}
.close {
  width: 45px;
  height: 20px;
  margin-top: 1px;
  background: #c85050;
  display: flex;
  align-items: center;
  justify-content: center;
}
.close svg {
  width: 8px;
  height: 8px;
}

/* shared widgets */
.app {
  flex: 1;
  min-height: 0;
  display: flex;
  flex-direction: column;
  background: #000;
}
.header {
  position: relative;
  display: flex;
  align-items: center;
  flex: none;
  padding-left: 8px;
  background: linear-gradient(#767676, #686868);
}
.ic {
  width: 16px;
  height: 16px;
  flex: none;
}
.dim {
  opacity: 0.65;
}
.faint {
  opacity: 0.4;
}
.flip {
  transform: scaleX(-1);
}
.ud {
  width: 6px;
  height: 14px;
  flex: none;
}
.dd {
  display: flex;
  align-items: center;
  justify-content: space-between;
  width: 32px;
  height: 20px;
  flex: none;
  padding: 0 3px 0 4px;
  border: 1px solid #1e1e1e;
  border-radius: 5px;
  background: linear-gradient(#4c4c4c, #323232);
  box-shadow: 0 1px 0 rgba(255, 255, 255, 0.12);
}
.select {
  display: flex;
  align-items: center;
  justify-content: space-between;
  height: 20px;
  flex: none;
  padding: 0 3px 0 7px;
  border: 1px solid #1e1e1e;
  border-radius: 4px;
  background: linear-gradient(#505050, #353535);
  box-shadow: 0 1px 0 rgba(255, 255, 255, 0.12);
  color: #f0f0f0;
}
.select > span {
  padding-top: 2px;
}
.menus {
  display: flex;
  gap: 20px;
  flex: none;
  margin-left: 13px;
  padding-top: 2px;
}
.idblock, .btns, .icongroup {
  display: flex;
  flex: none;
  height: 20px;
  border: 1px solid #2a2a2a;
  border-radius: 5px;
  overflow: hidden;
}
.idblock .dd {
  height: 18px;
  width: 31px;
  border: none;
  border-radius: 0;
}
.name {
  width: 118px;
  padding: 1px 0 0 7px;
  display: flex;
  align-items: center;
  border-left: 1px solid #2a2a2a;
  background: linear-gradient(#999, #b0b0b0);
}
.btn {
  width: 20px;
  display: flex;
  align-items: center;
  justify-content: center;
  border-left: 1px solid #2a2a2a;
  background: linear-gradient(#a8a8a8, #888);
}
.btns .btn:first-child {
  border-left: none;
  width: 19px;
}
.btns.one {
  width: 20px;
}
.btns.off {
  border-color: #5a5a5a;
  opacity: 0.7;
}
.icongroup > div {
  width: 20px;
  display: flex;
  align-items: center;
  justify-content: center;
  border-left: 1px solid #1c1c1c;
  background: linear-gradient(#484848, #5a5a5a);
}
.icongroup > div:first-child {
  border-left: none;
  width: 18px;
}
.icongroup > .on {
  background: linear-gradient(#4568a8, #6488cc);
}
.check {
  position: relative;
  width: 14px;
  height: 14px;
  flex: none;
  border: 1px solid #2c2c2c;
  border-radius: 4px;
  background: linear-gradient(#404040, #5a5a5a);
}
.checked::after {
  content: "";
  position: absolute;
  left: 4px;
  top: -2px;
  width: 4px;
  height: 9px;
  border: solid #f0f0f0;
  border-width: 0 2px 2px 0;
  transform: rotate(35deg);
}
.fields {
  display: flex;
  height: 20px;
  flex: none;
  border: 1px solid #303030;
  border-radius: 10px;
  overflow: hidden;
  background: linear-gradient(#a0a0a0, #b6b6b6);
  box-shadow: 0 1px 0 rgba(255, 255, 255, 0.15);
}
.field {
  flex: 1;
  display: flex;
  align-items: center;
  gap: 6px;
  padding: 0 5px;
}
.field + .field {
  border-left: 1px solid #303030;
}
.field span {
  flex: 1;
}
.field span, .field em {
  padding-top: 2px;
}
.field::before, .field::after {
  content: "";
  border: solid transparent;
  border-width: 3px 4px;
}
.field::before {
  border-right-color: #6c6c6c;
  border-left: none;
}
.field::after {
  border-left-color: #6c6c6c;
  border-right: none;
}
.corner {
  position: absolute;
  width: 12px;
  height: 12px;
}
.corner.tr {
  right: 0;
  top: 1px;
}
.corner.bl {
  left: 0;
  bottom: 0;
}

/* info header */
.info-header {
  height: 26px;
  margin-bottom: 1px;
  background: linear-gradient(#5f6463, #6c6c6c 40%, #686868);
  padding-top: 2px;
}
.menus-info {
  width: 188px;
}
.scene-block {
  margin-left: 6px;
}
.engine {
  width: 126px;
  margin-left: 17px;
}
.logo {
  margin: 0 8px 0 19px;
}
.stats {
  padding-top: 2px;
  letter-spacing: -0.04px;
}
.areas {
  flex: 1;
  min-height: 0;
  display: flex;
  gap: 2px;
}
.left {
  width: 1279px;
  display: flex;
  flex-direction: column;
}

/* node editor */
.canvas {
  position: relative;
  height: 856px;
  flex: none;
  overflow: hidden;
  border-top: 1px solid #5a5a5a;
  background:
    linear-gradient(#1e1e1e, #1e1e1e) 521px 0 / 1px 100% no-repeat,
    linear-gradient(#1e1e1e, #1e1e1e) 0 409px / 100% 1px no-repeat,
    repeating-linear-gradient(90deg, #282828 0, #282828 1px, transparent 1px, transparent 68.800px) 39.400px 0 / 1376px 100%,
    repeating-linear-gradient(#282828 0, #282828 1px, transparent 1px, transparent 68.800px) 0 -3.800px / 100% 1032px,
    repeating-linear-gradient(90deg, rgba(0, 0, 0, 0.16) 0, rgba(0, 0, 0, 0.16) 1px, transparent 1px, transparent 13.760px) 39.400px 0 / 1376px 100%,
    repeating-linear-gradient(rgba(0, 0, 0, 0.16) 0, rgba(0, 0, 0, 0.16) 1px, transparent 1px, transparent 13.760px) 0 -3.800px / 100% 1032px,
    repeating-linear-gradient(90deg, rgba(0, 0, 0, 0.035) 0, rgba(0, 0, 0, 0.035) 1px, transparent 1px, transparent 2.752px) 39.400px 0 / 1376px 100%,
    #393939;
}
.tab {
  position: absolute;
  top: 22px;
  width: 13px;
  height: 14px;
  line-height: 13px;
  text-align: center;
  font-weight: bold;
  background: #2b2b2b;
  color: #8a8a8a;
}
.tab-left {
  left: 0;
  padding-right: 2px;
  border-radius: 0 4px 4px 0;
}
.tab-right {
  right: 1px;
  border-radius: 4px 0 0 4px;
  background: rgba(60, 60, 60, 0.6);
}
.wire {
  position: absolute;
  left: 0;
  top: -1px;
  width: 1280px;
  height: 856px;
}
.wire-back {
  fill: none;
  stroke: #1a1a1a;
  stroke-width: 3.400;
}
.wire-front {
  fill: none;
  stroke: #8a8a8a;
  stroke-width: 1.400;
}
.node {
  position: absolute;
  border-radius: 5px;
  background: #5c5c5c;
  box-shadow: 0 1px 5px 1px rgba(0, 0, 0, 0.6);
  font-size: 8px;
  letter-spacing: 0;
  white-space: nowrap;
}
.bsdf {
  left: 434px;
  top: 273px;
  width: 104px;
  height: 334px;
}
.output {
  left: 727px;
  top: 203px;
  width: 97px;
  height: 62px;
}
.node-title {
  display: flex;
  align-items: center;
  height: 14px;
  padding: 1px 0 0 4px;
  border-radius: 5px 5px 0 0;
  background: #525256;
}
.bsdf .node-title {
  padding-top: 3px;
}
.output .node-title {
  background: #525252;
}
.node-title i {
  margin-right: 6px;
  border: solid transparent;
  border-width: 6px 3px 0;
  border-top-color: #3c3c3c;
}
.out {
  position: relative;
  height: 21px;
  line-height: 23px;
  padding-right: 16px;
  text-align: right;
}
.nselect {
  display: flex;
  align-items: center;
  justify-content: space-between;
  height: 13px;
  width: 89px;
  padding: 0 2px 0 4px;
  border: 1px solid #1e1e1e;
  border-radius: 3px;
  background: linear-gradient(#505050, #353535);
  color: #f0f0f0;
}
.nud {
  width: 4px;
  height: 9px;
}
.dist {
  margin: 0 0 4px 8px;
  height: 14px;
}
.row {
  position: relative;
  display: flex;
  align-items: center;
  height: 14.450px;
  padding-left: 8px;
}
.row.tall {
  height: 15px;
}
.sock {
  position: absolute;
  left: -3.500px;
  top: 50%;
  width: 7px;
  height: 7px;
  margin-top: -3.500px;
  border: 0.5px solid #222;
  border-radius: 50%;
  box-shadow: 0 0 0 0.5px rgba(0, 0, 0, 0.4);
}
.out .sock {
  left: auto;
  right: -3.500px;
}
.green { background: #63c763; }
.yellow { background: #c7c729; }
.grey { background: #a8a8a8; }
.blue { background: #6363c7; }
.swatch {
  width: 21px;
  height: 13px;
  margin-right: 10px;
  border: 1px solid #2a2a2a;
  border-radius: 4px;
}
.white { background: #e8fcfd; }
.red { background: #cf5350; }
.num {
  position: relative;
  display: flex;
  justify-content: space-between;
  align-items: center;
  width: 89px;
  height: 13px;
  padding: 0 11px 0 8px;
  border: 1px solid #2a2a2a;
  border-radius: 7px;
  background: linear-gradient(90deg, #7a7a7a var(--fill), #adadad var(--fill));
}
.num span {
  width: 44px;
}
.ior::before, .ior::after {
  content: "";
  position: absolute;
  left: 3px;
  border: solid transparent;
  border-width: 2px 3px 2px 0;
  border-right-color: #666;
}
.ior::after {
  left: auto;
  right: 4px;
  border-width: 2px 0 2px 3px;
  border-left-color: #666;
}
.plain {
  padding-left: 5px;
}
.mat-name {
  position: absolute;
  left: 30px;
  bottom: 26px;
  color: #fff;
}
.vscroll {
  position: absolute;
  right: 3px;
  top: 6px;
  width: 12px;
  height: 827px;
  border-radius: 6px;
  background: linear-gradient(90deg, #8c8c8c, #6c6c6c);
}
.hscroll {
  position: absolute;
  left: 5px;
  bottom: 5px;
  width: 1253px;
  height: 11px;
  border-radius: 6px;
  background: linear-gradient(#8c8c8c, #6e6e6e);
}
.node-header {
  height: 26px;
  padding-top: 2px;
  margin-bottom: 1px;
}
.menus-node {
  width: 172px;
}
.shader-type, .snap, .mat-block {
  margin-left: 5px;
}
.users {
  width: 24px;
}
.users, .fake {
  padding-top: 1px;
}
.use-nodes {
  margin-left: 8px;
  margin-top: -3px;
}
.use-nodes-label {
  width: 60px;
  margin: 0 0 0 8px;
  padding-top: 2px;
  color: #fff;
  flex: none;
}
.pin-btn {
  margin-left: 8px;
}
.up-btn {
  margin-left: 5px;
}
.backdrop-btn {
  width: 20px;
  margin-left: 16px;
}
.backdrop-btn div {
  background: linear-gradient(#3c3c3c, #505050);
}
.magnet {
  border-left: none;
  width: 19px;
}
.clip {
  margin-left: 5px;
}

/* timeline */
.timeline {
  position: relative;
  display: flex;
  height: 48px;
  flex: none;
  background: #444;
}
.timeline::after {
  content: "";
  position: absolute;
  inset: 0;
  background:
    repeating-linear-gradient(90deg, rgba(0, 0, 0, 0.22) 0, rgba(0, 0, 0, 0.22) 1px, transparent 1px, transparent 37.540px) 29px 0 / 1351.440px 100%,
    repeating-linear-gradient(90deg, rgba(0, 0, 0, 0.08) 0, rgba(0, 0, 0, 0.08) 1px, transparent 1px, transparent 18.770px) 29px 0 / 1351.440px 100%;
}
.before {
  width: 219px;
}
.range {
  width: 936px;
  background: #737373;
}
.after {
  flex: 1;
}
.frame-line {
  position: absolute;
  left: 220px;
  top: 0;
  width: 3px;
  height: 49px;
  background: #5cb848;
  z-index: 1;
}
.ruler {
  display: flex;
  align-items: center;
  height: 15px;
  flex: none;
  padding: 1px 0 0 7px;
  border: 1px solid #303030;
  border-left: 5px solid #6b6b6b;
  border-right: 4px solid #6b6b6b;
  overflow: hidden;
  background: linear-gradient(#686868, #808080);
  font-size: 12px;
  letter-spacing: 0;
}
.ruler span {
  width: 37.300px;
  flex: none;
  text-align: center;
}
.time-header {
  flex: 1;
  padding: 4px 0 0 9px;
  background: linear-gradient(#787878, #666 40%, #6a6a6a);
}
.menus-time {
  width: 209px;
}
.time-header .btns .btn:first-child {
  width: 18px;
}
.range-fields {
  width: 227px;
  margin-left: 5px;
}
.current-field {
  width: 88px;
  margin-left: 7px;
}
.transport {
  margin-left: 16px;
}
.sync {
  width: 114px;
  margin-left: 6px;
}
.rec-btn {
  margin-left: 17px;
}
.keytype {
  margin-left: 6px;
}
.keying {
  margin-left: 5px;
}
.keying .name {
  width: 129px;
  padding: 0 0 0 2px;
  border-left: none;
}

/* outliner */
.right {
  flex: 1;
  min-width: 0;
  display: flex;
  flex-direction: column;
}
.outliner-header {
  height: 26px;
  border-top: 1px solid #8a8a8a;
}
.menus-outliner {
  width: 92px;
}
.scenes {
  width: 119px;
}
.search {
  width: 111px;
  height: 20px;
  margin-left: 5px;
  padding: 1px 3px;
  border: 1px solid #2e2e2e;
  border-radius: 4px;
  background: linear-gradient(#909090, #aaa);
}
.outliner {
  position: relative;
  height: 212px;
  flex: none;
  padding-top: 1px;
  background:
    linear-gradient(#5f5f5f, #5f5f5f) 563px 0 / 1px 100% no-repeat,
    linear-gradient(#5f5f5f, #5f5f5f) 582px 0 / 1px 100% no-repeat,
    linear-gradient(#5f5f5f, #5f5f5f) 603px 0 / 1px 100% no-repeat,
    repeating-linear-gradient(#6f6f6f 0, #6f6f6f 20px, #767676 20px, #767676 40px) 0 1px;
}
.outliner::before {
  content: "";
  position: absolute;
  left: 30px;
  top: 21px;
  width: 1px;
  height: 170px;
  background: #333;
}
.orow {
  position: relative;
  display: flex;
  align-items: center;
  height: 20px;
  padding-left: 26px;
}
.root {
  padding-left: 6px;
  width: 563px;
  background: linear-gradient(transparent 1px, #82878a 1px, #82878a 19px, transparent 19px);
}
.exp {
  position: relative;
  width: 9px;
  height: 9px;
  border: 1px solid #111;
  border-radius: 50%;
  background:
    linear-gradient(#111, #111) center / 5px 1px no-repeat,
    linear-gradient(#111, #111) center / 1px 5px no-repeat,
    #d8d8d8;
}
.exp::after {
  content: "";
  position: absolute;
  left: 8px;
  top: 3px;
  width: 8px;
  height: 1px;
  background: #333;
}
.minus {
  background: linear-gradient(#111, #111) center / 5px 1px no-repeat, #e8e8e8;
}
.none {
  visibility: hidden;
}
.orow .ic {
  margin-left: 8px;
}
.orow > span {
  margin-left: 4px;
  padding-top: 1px;
}
.orow u {
  width: 1px;
  height: 13px;
  margin: 0 3px 0 10px;
  background: #444;
}
.orow .mod {
  margin-left: 3px;
}
.glow {
  border-radius: 50%;
  background: rgba(220, 220, 220, 0.4);
}
.active {
  color: #fff;
}
.active .exp + .ic {
  border-radius: 50%;
  background: #c98a3e;
}
.flags {
  position: absolute;
  left: 566px;
  display: flex;
}
.flags .ic {
  width: 15px;
  height: 15px;
  margin: 0 5px 0 0;
}
.flags .ic:last-child {
  margin-left: -1px;
}

/* properties */
.props-header {
  height: 26px;
  margin-top: 1px;
  padding-bottom: 1px;
  border-top: 1px solid #858585;
  background: #6c6c6c;
}
.tabs {
  margin-left: 8px;
}
.tabs .dim {
  opacity: 0.55;
}
.properties {
  position: relative;
  flex: 1;
  min-height: 0;
  display: flex;
  overflow: hidden;
  border-top: 1px solid #858585;
  background: #727272;
}
.panels {
  width: 602px;
  margin-top: -1px;
}
.pscroll {
  width: 14px;
  height: 702px;
  margin: 4px 0 0 3px;
  border-radius: 7px;
  border: 1px solid #4c4c4c;
  background: #5a5a5a;
}
.pscroll i {
  display: block;
  width: 12px;
  height: 457px;
  margin-top: 155px;
  border-radius: 6px;
  background: linear-gradient(90deg, #959595, #757575);
}
.units {
  height: 73px;
}
.prow {
  display: flex;
  align-items: flex-start;
  height: 22px;
  padding-left: 15px;
  line-height: 22px;
}
.prow label {
  width: 192px;
  flex: none;
}
.prow .select {
  width: 390px;
  line-height: 17px;
}
.prow .field {
  line-height: 17px;
}
.wide label {
  width: 204px;
}
.wide .select, .wide .fields {
  width: 378px;
}
.wide {
  height: 24px;
}
.units .wide:first-child {
  line-height: 21px;
}
.wide.disabled label {
  line-height: 23px;
}
.select.cut {
  border-top: none;
  border-radius: 0 0 4px 4px;
}
.select.cut > span {
  padding-top: 0;
}
.wide .check {
  margin: 1px 7px 0 3px;
}
.wide .check + span {
  line-height: 19px;
}
.disabled .fields {
  background: linear-gradient(#858585, #929292);
  border-color: #555;
}
.disabled .field::before, .disabled .field::after {
  opacity: 0.4;
}
.disabled {
  color: #464646;
}
.disabled .check {
  border-color: #4c4c4c;
  background: #606060;
}
.panel {
  margin-left: 5px;
  border-top: 1px solid #414141;
  box-shadow: inset 0 1px 0 #8a8a8a;
  width: 595px;
}
.phead {
  display: flex;
  align-items: center;
  height: 24px;
  padding: 0 6px 0 8px;
  font-size: 12.500px;
  letter-spacing: -0.1px;
}
.phead i {
  width: 12px;
  flex: none;
}
.phead i::before {
  content: "";
  display: block;
  width: 0;
  border: solid transparent;
  border-width: 5px 0 5px 8px;
  border-left-color: #222;
}
.phead i.expanded::before {
  border-width: 9px 4px 0;
  border-color: #222 transparent transparent;
}
.phead span {
  flex: 1;
}
.phead .check {
  margin-right: 6px;
}
.grip {
  width: 12px;
  height: 5px;
  margin-top: 2px;
  background:
    repeating-linear-gradient(90deg, #222 0, #222 1px, #aaa 1px, #aaa 2px, transparent 2px, transparent 3px) 0 0 / 100% 1px no-repeat,
    repeating-linear-gradient(90deg, #222 0, #222 1px, #aaa 1px, #aaa 2px, transparent 2px, transparent 3px) 0 2px / 100% 1px no-repeat,
    repeating-linear-gradient(90deg, #222 0, #222 1px, #aaa 1px, #aaa 2px, transparent 2px, transparent 3px) 0 4px / 100% 1px no-repeat;
}
.keying-sets {
  height: 80px;
}
.list-row {
  display: flex;
  gap: 8px;
  padding: 8px 0 0 3px;
}
.list {
  position: relative;
  width: 561px;
  height: 40px;
  border: 1px solid #3c3c3c;
  border-radius: 4px;
  background: #808080;
}
.filter {
  position: absolute;
  left: 9px;
  bottom: 5px;
  width: 9px;
  height: 9px;
  line-height: 8px;
  text-align: center;
  font-size: 10px;
  border-radius: 50%;
  background: #b0b0b0;
  letter-spacing: 0;
}
.handle {
  position: absolute;
  left: 282px;
  bottom: 7px;
  width: 15px;
  height: 5px;
  border: solid #222;
  border-width: 1px 0;
  box-shadow: 0 1px 0 #bbb, inset 0 1px 0 #bbb;
}
.list-btns {
  width: 20px;
  height: 40px;
  border: 1px solid #333;
  border-radius: 5px;
  overflow: hidden;
  background: linear-gradient(#a4a4a4, #909090 50%, #7a7a7a 50%);
}
.list-btns div {
  height: 19px;
  display: flex;
  align-items: center;
  justify-content: center;
}
.list-btns .off {
  border-top: 1px solid #444;
}
.list-btns .off i {
  width: 11px;
  height: 3px;
  border: 1px solid #666;
  background: #aaa;
}
.color {
  height: 280px;
}
.color .phead {
  margin-bottom: 8px;
}
.color .prow {
  padding-left: 10px;
}
.color .spaced {
  margin-top: 11px;
}
.color .curves {
  padding-left: 6px;
}
.curves .check {
  margin: 3px 7px 0 0;
}
.slider {
  display: flex;
  justify-content: space-between;
  align-items: center;
  width: 589px;
  height: 20px;
  margin: 0 0 2px 3px;
  padding: 2px 14px 0 13px;
  border: 1px solid #303030;
  border-radius: 10px;
  background: linear-gradient(90deg, #757575 var(--fill), #a9a9a9 var(--fill));
  box-shadow: 0 1px 0 rgba(255, 255, 255, 0.15);
}
.closed {
  height: 24px;
}
.gravity, .rigid {
  height: 60px;
}
.panel .fields, .wide-btn {
  width: 589px;
  margin: 8px 0 0 3px;
}
.wide-btn {
  height: 20px;
  line-height: 20px;
  text-align: center;
  border: 1px solid #303030;
  border-radius: 5px;
  background: linear-gradient(#a6a6a6, #8a8a8a);
}
.simplify .disabled {
  padding-top: 8px;
}
.sub {
  height: 20px;
  line-height: 22px;
  padding-left: 10px;
}
.simplify .fields {
  margin: 0 0 5px 3px;
}

/* taskbar */
.taskbar {
  height: 40px;
  display: flex;
  align-items: center;
  background:
    radial-gradient(ellipse 16px 16px at 1343px 14px, rgba(140, 155, 175, 0.6) 40%, transparent),
    radial-gradient(ellipse 12px 18px at 1590px 24px, rgba(125, 135, 185, 0.7) 30%, transparent),
    radial-gradient(ellipse 14px 14px at 1660px 14px, rgba(140, 160, 175, 0.6) 30%, transparent),
    radial-gradient(ellipse 12px 18px at 1516px 38px, rgba(140, 160, 175, 0.6) 30%, transparent),
    radial-gradient(ellipse 12px 12px at 1566px 8px, rgba(140, 160, 175, 0.6) 30%, transparent),
    radial-gradient(ellipse 14px 20px at 1735px 26px, rgba(130, 160, 170, 0.6) 30%, transparent),
    radial-gradient(ellipse 14px 20px at 1064px 14px, rgba(130, 155, 170, 0.6) 30%, transparent),
    radial-gradient(ellipse 12px 20px at 1094px 14px, rgba(130, 150, 180, 0.5) 30%, transparent),
    radial-gradient(ellipse 24px 12px at 930px 28px, rgba(110, 175, 165, 0.6) 30%, transparent),
    radial-gradient(ellipse 22px 12px at 996px 14px, rgba(110, 170, 165, 0.6) 30%, transparent),
    radial-gradient(ellipse 20px 16px at 686px 8px, rgba(110, 125, 175, 0.7) 30%, transparent),
    radial-gradient(ellipse 14px 18px at 230px 24px, rgba(110, 155, 160, 0.6) 30%, transparent),
    radial-gradient(ellipse 14px 12px at 360px 6px, rgba(120, 150, 170, 0.6) 30%, transparent),
    radial-gradient(ellipse 50px 30px at 50px 10px, rgba(40, 95, 95, 0.6) 30%, transparent),
    linear-gradient(90deg, #3d8580, #398079 35%, #44a094 50%, #3c9187 60%, #3c837e 68%, #458f8a 85%, #3a8a80);
}
.task {
  width: 58px;
  height: 39px;
  margin-right: 4px;
  flex: none;
  display: flex;
  align-items: center;
  justify-content: center;
  border: 1px solid transparent;
}
.task svg {
  width: 32px;
  height: 32px;
}
.start {
  width: 50px;
  margin-right: 2px;
}
.start svg {
  width: 26px;
  height: 26px;
}
.open {
  border-color: rgba(210, 230, 225, 0.6);
  background: rgba(190, 215, 210, 0.35);
}
.focus {
  border-color: #d8eeea;
  background: rgba(210, 230, 225, 0.6);
}
.ms {
  font: bold 16px "Open Sans", sans-serif;
  fill: #fff;
}
.hl {
  font: bold 10px "Open Sans", sans-serif;
  fill: #e8c880;
}
.tray {
  display: flex;
  align-items: center;
  gap: 8px;
  margin: 0 14px 0 auto;
  color: #fff;
}
.tray svg {
  width: 16px;
  height: 16px;
}
.tray .tray-up {
  width: 8px;
  height: 5px;
  margin-right: 4px;
}
.time {
  display: flex;
  flex-direction: column;
  align-items: center;
  width: 58px;
  margin-left: 7px;
  font: 12px/17px "Open Sans", sans-serif;
  letter-spacing: -0.3px;
}
```
